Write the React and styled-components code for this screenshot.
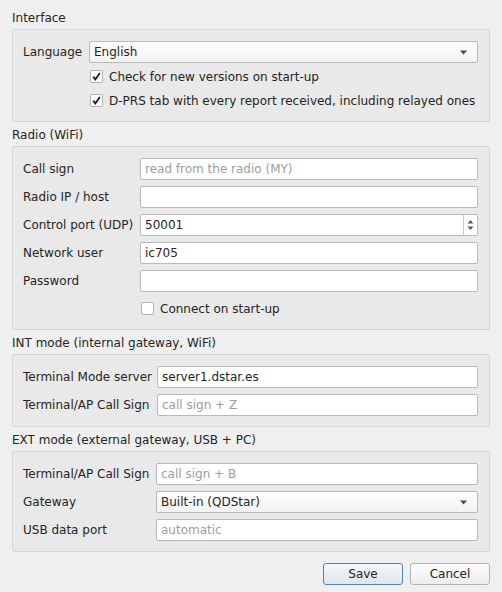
import React from 'react';
import styled, { createGlobalStyle } from 'styled-components';

const GlobalStyle = createGlobalStyle`
  html, body {
    margin: 0;
    padding: 0;
    background: #efefef;
  }

  body {
    font-family: "DejaVu Sans", "Liberation Sans", sans-serif;
    font-size: 12px;
    color: #252525;
  }
`;

const Page = styled.div`
  width: 502px;
  height: 592px;
  box-sizing: border-box;
  padding: 10px 12px 0;
  display: flex;
  flex-direction: column;
`;

const GroupTitle = styled.div`
  height: 17px;
  line-height: 17px;
  margin-bottom: 2px;
`;

const GroupBox = styled.div`
  display: grid;
  grid-template-columns: ${(p) => p.labelWidth}px 1fr;
  row-gap: ${(p) => p.rowGap}px;
  align-items: center;
  padding: 11px 11px 10px 10px;
  margin-bottom: 5px;
  border: 1px solid #d6d6d6;
  border-radius: 2px;
  background: #e9e9e9;
`;

const Label = styled.div`
  height: 22px;
  line-height: 22px;
  white-space: nowrap;
`;

const Field = styled.div`
  height: 22px;
  box-sizing: border-box;
  border: 1px solid #b9b9b9;
  border-radius: 2px;
  background: #ffffff;
  padding: 0 4px;
  line-height: 20px;
  color: ${(p) => (p.placeholder ? '#9d9d9d' : '#252525')};
  display: flex;
  align-items: center;
`;

const Value = styled.span`
  flex: 1;
  white-space: nowrap;
`;

const Combo = styled(Field)`
  background: linear-gradient(#fdfdfd, #f3f3f3);
  padding-right: 9px;
`;

const Spin = styled(Field)`
  padding-right: 0;
`;

const SpinArrows = styled.div`
  width: 13px;
  height: 100%;
  border-left: 1px solid #c8c8c8;
  display: flex;
  align-items: center;
  justify-content: center;
`;

const CheckRow = styled.label`
  grid-column: 2;
  height: 21px;
  display: flex;
  align-items: center;
  gap: 6px;
  padding-left: 1px;
  white-space: nowrap;
`;

const CheckBox = styled.span`
  width: 13px;
  height: 13px;
  box-sizing: border-box;
  border: 1px solid #b3b3b3;
  border-radius: 2px;
  background: #ffffff;
  display: flex;
  align-items: center;
  justify-content: center;
`;

const Buttons = styled.div`
  display: flex;
  justify-content: flex-end;
  gap: 7px;
  margin-top: 6px;
`;

const Button = styled.div`
  width: 80px;
  height: 22px;
  box-sizing: border-box;
  border: 1px solid ${(p) => (p.primary ? '#4f86b7' : '#b4b4b4')};
  border-radius: 3px;
  background: ${(p) =>
    p.primary
      ? 'linear-gradient(#f4f7fa, #dfe5eb)'
      : 'linear-gradient(#fdfdfd, #ededed)'};
  display: flex;
  align-items: center;
  justify-content: center;
`;

function Arrow() {
  return (
    <svg width="9" height="5" viewBox="0 0 9 5">
      <path d="M1 0.5 L8 0.5 L4.5 4.5 Z" fill="#4a4a4a" />
    </svg>
  );
}

function SpinGlyph() {
  return (
    <svg width="7" height="12" viewBox="0 0 7 12">
      <path d="M0.5 4.5 L6.5 4.5 L3.5 1 Z" fill="#5a5a5a" />
      <path d="M0.5 7.5 L6.5 7.5 L3.5 11 Z" fill="#5a5a5a" />
    </svg>
  );
}

function Check({ checked, children }) {
  return (
    <CheckRow>
      <CheckBox>
        {checked && (
          <svg width="9" height="9" viewBox="0 0 9 9">
            <path
              d="M1.2 4.6 L3.4 7.4 L7.8 1"
              fill="none"
              stroke="#1e1e1e"
              strokeWidth="1.8"
            />
          </svg>
        )}
      </CheckBox>
      {children}
    </CheckRow>
  );
}

function Row({ label, children }) {
  return (
    <>
      <Label>{label}</Label>
      {children}
    </>
  );
}

export default function App() {
  return (
    <Page>
      <GlobalStyle />

      <GroupTitle>Interface</GroupTitle>
      <GroupBox labelWidth={66} rowGap={3}>
        <Row label="Language">
          <Combo>
            <Value>English</Value>
            <Arrow />
          </Combo>
        </Row>
        <Check checked>Check for new versions on start-up</Check>
        <Check checked>D-PRS tab with every report received, including relayed ones</Check>
      </GroupBox>

      <GroupTitle>Radio (WiFi)</GroupTitle>
      <GroupBox labelWidth={117} rowGap={6}>
        <Row label="Call sign">
          <Field placeholder="1">
            <Value>read from the radio (MY)</Value>
          </Field>
        </Row>
        <Row label="Radio IP / host">
          <Field />
        </Row>
        <Row label="Control port (UDP)">
          <Spin>
            <Value>50001</Value>
            <SpinArrows>
              <SpinGlyph />
            </SpinArrows>
          </Spin>
        </Row>
        <Row label="Network user">
          <Field>
            <Value>ic705</Value>
          </Field>
        </Row>
        <Row label="Password">
          <Field />
        </Row>
        <Check>Connect on start-up</Check>
      </GroupBox>

      <GroupTitle>INT mode (internal gateway, WiFi)</GroupTitle>
      <GroupBox labelWidth={134} rowGap={6}>
        <Row label="Terminal Mode server">
          <Field>
            <Value>server1.dstar.es</Value>
          </Field>
        </Row>
        <Row label="Terminal/AP Call Sign">
          <Field placeholder="1">
            <Value>call sign + Z</Value>
          </Field>
        </Row>
      </GroupBox>

      <GroupTitle>EXT mode (external gateway, USB + PC)</GroupTitle>
      <GroupBox labelWidth={133} rowGap={6}>
        <Row label="Terminal/AP Call Sign">
          <Field placeholder="1">
            <Value>call sign + B</Value>
          </Field>
        </Row>
        <Row label="Gateway">
          <Combo>
            <Value>Built-in (QDStar)</Value>
            <Arrow />
          </Combo>
        </Row>
        <Row label="USB data port">
          <Field placeholder="1">
            <Value>automatic</Value>
          </Field>
        </Row>
      </GroupBox>

      <Buttons>
        <Button primary>Save</Button>
        <Button>Cancel</Button>
      </Buttons>
    </Page>
  );
}
